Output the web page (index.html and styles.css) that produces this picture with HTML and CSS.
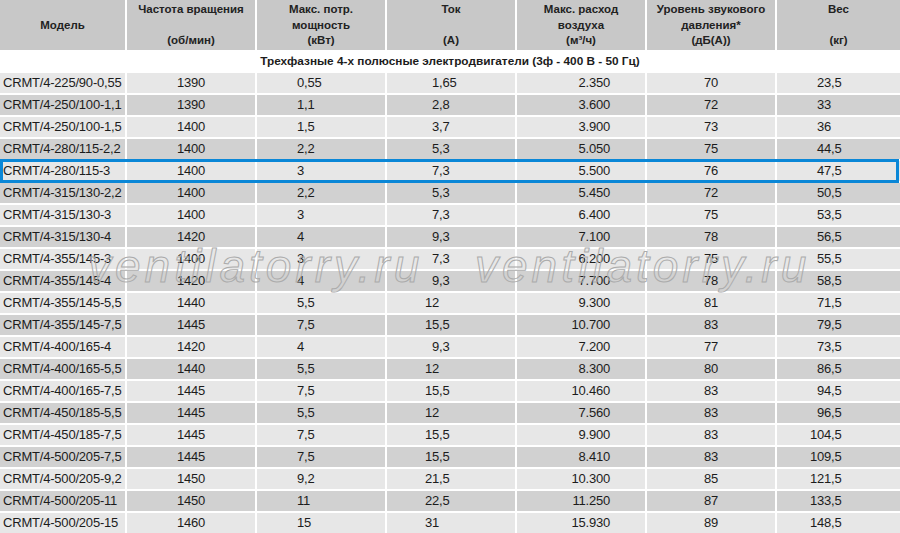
FILE: index.html
```html
<!DOCTYPE html>
<html lang="ru">
<head>
<meta charset="utf-8">
<title>CRMT</title>
<link rel="stylesheet" href="styles.css">
</head>
<body>
<div class="sheet">
  <div class="table">
    <div class="row head">
      <div class="c"><div>&nbsp;</div><div>Модель</div><div>&nbsp;</div></div>
      <div class="c"><div>Частота вращения</div><div>&nbsp;</div><div>(об/мин)</div></div>
      <div class="c"><div>Макс. потр.</div><div>мощность</div><div>(кВт)</div></div>
      <div class="c"><div>Ток</div><div>&nbsp;</div><div>(A)</div></div>
      <div class="c"><div>Макс. расход</div><div>воздуха</div><div>(м³/ч)</div></div>
      <div class="c"><div>Уровень звукового</div><div>давления*</div><div>(дБ(А))</div></div>
      <div class="c"><div>Вес</div><div>&nbsp;</div><div>(кг)</div></div>
    </div>
    <div class="section">Трехфазные 4-х полюсные электродвигатели (3ф - 400 В - 50 Гц)</div>

    <div class="row odd"><div class="c m">CRMT/4-225/90-0,55</div><div class="c n">1390</div><div class="c p">0,55</div><div class="c a"><span class="i">1</span>,65</div><div class="c q">2.350</div><div class="c n">70</div><div class="c w"><span class="i">23</span>,5</div></div>
    <div class="row even"><div class="c m">CRMT/4-250/100-1,1</div><div class="c n">1390</div><div class="c p">1,1</div><div class="c a"><span class="i">2</span>,8</div><div class="c q">3.600</div><div class="c n">72</div><div class="c w"><span class="i">33</span></div></div>
    <div class="row odd"><div class="c m">CRMT/4-250/100-1,5</div><div class="c n">1400</div><div class="c p">1,5</div><div class="c a"><span class="i">3</span>,7</div><div class="c q">3.900</div><div class="c n">73</div><div class="c w"><span class="i">36</span></div></div>
    <div class="row even"><div class="c m">CRMT/4-280/115-2,2</div><div class="c n">1400</div><div class="c p">2,2</div><div class="c a"><span class="i">5</span>,3</div><div class="c q">5.050</div><div class="c n">75</div><div class="c w"><span class="i">44</span>,5</div></div>
    <div class="row odd selected"><div class="c m">CRMT/4-280/115-3</div><div class="c n">1400</div><div class="c p">3</div><div class="c a"><span class="i">7</span>,3</div><div class="c q">5.500</div><div class="c n">76</div><div class="c w"><span class="i">47</span>,5</div></div>
    <div class="row even"><div class="c m">CRMT/4-315/130-2,2</div><div class="c n">1400</div><div class="c p">2,2</div><div class="c a"><span class="i">5</span>,3</div><div class="c q">5.450</div><div class="c n">72</div><div class="c w"><span class="i">50</span>,5</div></div>
    <div class="row odd"><div class="c m">CRMT/4-315/130-3</div><div class="c n">1400</div><div class="c p">3</div><div class="c a"><span class="i">7</span>,3</div><div class="c q">6.400</div><div class="c n">75</div><div class="c w"><span class="i">53</span>,5</div></div>
    <div class="row even"><div class="c m">CRMT/4-315/130-4</div><div class="c n">1420</div><div class="c p">4</div><div class="c a"><span class="i">9</span>,3</div><div class="c q">7.100</div><div class="c n">78</div><div class="c w"><span class="i">56</span>,5</div></div>
    <div class="row odd"><div class="c m">CRMT/4-355/145-3</div><div class="c n">1400</div><div class="c p">3</div><div class="c a"><span class="i">7</span>,3</div><div class="c q">6.200</div><div class="c n">75</div><div class="c w"><span class="i">55</span>,5</div></div>
    <div class="row even"><div class="c m">CRMT/4-355/145-4</div><div class="c n">1420</div><div class="c p">4</div><div class="c a"><span class="i">9</span>,3</div><div class="c q">7.700</div><div class="c n">78</div><div class="c w"><span class="i">58</span>,5</div></div>
    <div class="row odd"><div class="c m">CRMT/4-355/145-5,5</div><div class="c n">1440</div><div class="c p">5,5</div><div class="c a"><span class="i">12</span></div><div class="c q">9.300</div><div class="c n">81</div><div class="c w"><span class="i">71</span>,5</div></div>
    <div class="row even"><div class="c m">CRMT/4-355/145-7,5</div><div class="c n">1445</div><div class="c p">7,5</div><div class="c a"><span class="i">15</span>,5</div><div class="c q">10.700</div><div class="c n">83</div><div class="c w"><span class="i">79</span>,5</div></div>
    <div class="row odd"><div class="c m">CRMT/4-400/165-4</div><div class="c n">1420</div><div class="c p">4</div><div class="c a"><span class="i">9</span>,3</div><div class="c q">7.200</div><div class="c n">77</div><div class="c w"><span class="i">73</span>,5</div></div>
    <div class="row even"><div class="c m">CRMT/4-400/165-5,5</div><div class="c n">1440</div><div class="c p">5,5</div><div class="c a"><span class="i">12</span></div><div class="c q">8.300</div><div class="c n">80</div><div class="c w"><span class="i">86</span>,5</div></div>
    <div class="row odd"><div class="c m">CRMT/4-400/165-7,5</div><div class="c n">1445</div><div class="c p">7,5</div><div class="c a"><span class="i">15</span>,5</div><div class="c q">10.460</div><div class="c n">83</div><div class="c w"><span class="i">94</span>,5</div></div>
    <div class="row even"><div class="c m">CRMT/4-450/185-5,5</div><div class="c n">1445</div><div class="c p">5,5</div><div class="c a"><span class="i">12</span></div><div class="c q">7.560</div><div class="c n">83</div><div class="c w"><span class="i">96</span>,5</div></div>
    <div class="row odd"><div class="c m">CRMT/4-450/185-7,5</div><div class="c n">1445</div><div class="c p">7,5</div><div class="c a"><span class="i">15</span>,5</div><div class="c q">9.900</div><div class="c n">83</div><div class="c w"><span class="i">104</span>,5</div></div>
    <div class="row even"><div class="c m">CRMT/4-500/205-7,5</div><div class="c n">1445</div><div class="c p">7,5</div><div class="c a"><span class="i">15</span>,5</div><div class="c q">8.410</div><div class="c n">83</div><div class="c w"><span class="i">109</span>,5</div></div>
    <div class="row odd"><div class="c m">CRMT/4-500/205-9,2</div><div class="c n">1450</div><div class="c p">9,2</div><div class="c a"><span class="i">21</span>,5</div><div class="c q">10.300</div><div class="c n">85</div><div class="c w"><span class="i">121</span>,5</div></div>
    <div class="row even"><div class="c m">CRMT/4-500/205-11</div><div class="c n">1450</div><div class="c p">11</div><div class="c a"><span class="i">22</span>,5</div><div class="c q">11.250</div><div class="c n">87</div><div class="c w"><span class="i">133</span>,5</div></div>
    <div class="row odd"><div class="c m">CRMT/4-500/205-15</div><div class="c n">1460</div><div class="c p">15</div><div class="c a"><span class="i">31</span></div><div class="c q">15.930</div><div class="c n">89</div><div class="c w"><span class="i">148</span>,5</div></div>
  </div>
  <div class="wm wm1">ventilatorry.ru</div>
  <div class="wm wm2">ventilatorry.ru</div>
</div>
</body>
</html>
```

FILE: styles.css
```css
html, body {
  margin: 0;
  padding: 0;
  background: #ffffff;
}

.sheet {
  position: relative;
  width: 900px;
  height: 533px;
  overflow: hidden;
}

.table {
  display: flex;
  flex-direction: column;
  gap: 2px;
}

.row {
  display: grid;
  grid-template-columns: 125px repeat(5, 128px) 123px;
  column-gap: 2px;
  height: 20px;
  font-family: "Liberation Sans", Arial, sans-serif;
  font-size: 13px;
  letter-spacing: -0.2px;
  line-height: 20px;
  color: #1c1c1c;
  white-space: nowrap;
}

.row.odd .c { background: #e7e7e7; }
.row.even .c { background: #d1d1d1; }

.row.head {
  height: 49.5px;
  font-weight: bold;
  font-size: 11.5px;
  letter-spacing: 0;
  line-height: 15.5px;
  color: #222222;
}

.row.head .c {
  background: #c8c8c8;
  text-align: center;
  padding-top: 2px;
}

.section {
  height: 19px;
  line-height: 19px;
  text-align: center;
  font-family: "Liberation Sans", Arial, sans-serif;
  font-weight: bold;
  font-size: 11.8px;
  color: #1c1c1c;
}

.c.m { padding-left: 3px; }
.c.n { text-align: center; }
.c.p { padding-left: 40px; }
.c.q { text-align: right; padding-right: 35px; }
.c.a { padding-left: 12px; }
.c.w { padding-left: 14px; }

.c .i {
  display: inline-block;
  width: 40px;
  text-align: right;
}

.row.selected {
  position: relative;
}

.row.selected::after {
  content: "";
  position: absolute;
  left: 0;
  right: 1px;
  top: -1.5px;
  bottom: -2px;
  border: 3px solid #0a87d7;
}

.wm {
  position: absolute;
  top: 238px;
  font-family: "Liberation Sans", Arial, sans-serif;
  font-style: italic;
  font-size: 46px;
  letter-spacing: 4px;
  line-height: 56px;
  color: transparent;
  -webkit-text-stroke: 1px #ababab;
  white-space: nowrap;
  pointer-events: none;
}

.wm1 { left: 88px; }
.wm2 { left: 475px; }
```
